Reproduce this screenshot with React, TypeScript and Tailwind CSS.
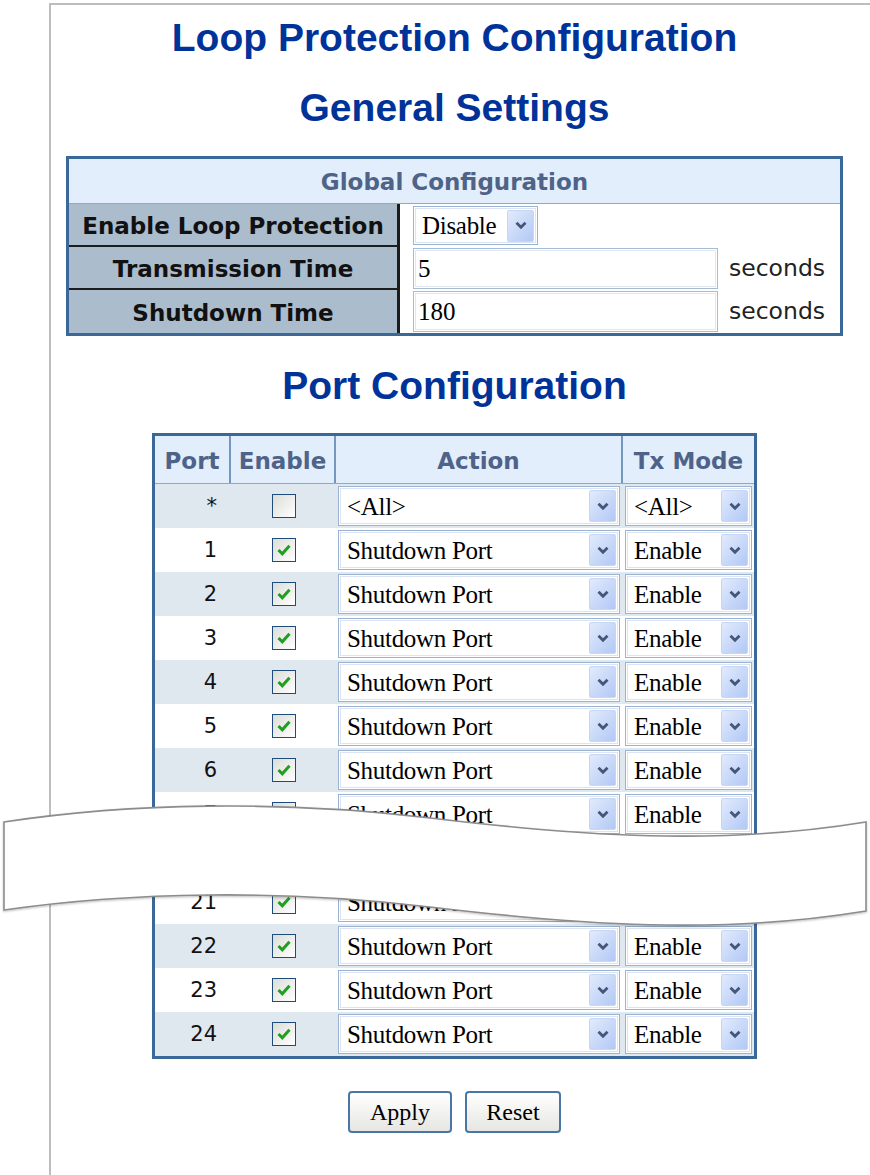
import React from 'react'

const SANS = "font-['DejaVu_Sans','Liberation_Sans',sans-serif]"
const SERIF = "font-['Liberation_Serif','DejaVu_Serif',serif]"

type Row = { port: string; on: boolean; action: string; tx: string }

const ROWS: Row[] = [
  { port: '*', on: false, action: '<All>', tx: '<All>' },
  ...['1', '2', '3', '4', '5', '6', '7', '8', '21', '22', '23', '24'].map((p) => ({
    port: p,
    on: true,
    action: 'Shutdown Port',
    tx: 'Enable',
  })),
]

function Chevron() {
  return (
    <svg width="12" height="9" viewBox="0 0 12 9">
      <path d="M1.5 1.8 L6 6.3 L10.5 1.8" fill="none" stroke="#44567a" strokeWidth="2.8" />
    </svg>
  )
}

function Select({ value, className }: { value: string; className: string }) {
  return (
    <div
      className={`flex items-center justify-between bg-white border border-[#9ab3d2] shadow-[inset_0_0_0_1px_#ffffff,inset_0_0_0_2px_#dbe4f0] pl-[8px] pr-[3px] ${className}`}
    >
      <span className={`${SERIF} text-[25px] leading-none text-black tracking-[-0.3px]`}>{value}</span>
      <span className="flex items-center justify-center w-[27px] h-[32px] rounded-[2px] border border-[#c7d6f5] bg-linear-to-br from-[#e2ebfd] to-[#b2c8f4]">
        <Chevron />
      </span>
    </div>
  )
}

function Checkbox({ on }: { on: boolean }) {
  return (
    <span className="flex items-center justify-center w-[24px] h-[24px] border border-[#1e4c7c] bg-linear-to-br from-[#dcdcd8] to-[#ffffff]">
      {on && (
        <svg width="16" height="14" viewBox="0 0 16 14">
          <path d="M2.5 7 L6.3 10.8 L13.5 2.8" fill="none" stroke="#1f9f1f" strokeWidth="3" />
        </svg>
      )}
    </span>
  )
}

function GlobalRow({ label, last, children }: { label: string; last?: boolean; children: React.ReactNode }) {
  return (
    <div className="flex h-[43px]">
      <div
        className={`w-[331px] flex items-center justify-center pt-[3px] bg-[#abbccc] border-r-[3px] border-[#1c1c1c] ${
          last ? '' : 'border-b-2'
        } ${SANS} font-bold text-[23px] text-[#111]`}
      >
        {label}
      </div>
      <div className="flex-1 flex items-center bg-white pl-[13px]">{children}</div>
    </div>
  )
}

function TextBox({ value }: { value: string }) {
  return (
    <>
      <div className="w-[305px] h-[41px] flex items-center border border-[#a6bcd6] shadow-[inset_0_0_0_1px_#ffffff,inset_0_0_0_2px_#e3e9f2] pl-[4px]">
        <span className={`${SERIF} text-[25px] leading-none text-black`}>{value}</span>
      </div>
      <span className={`ml-[11px] ${SANS} text-[23.5px] text-[#222]`}>seconds</span>
    </>
  )
}

export default function App() {
  return (
    <div className="relative w-[870px] h-[1175px] bg-white overflow-hidden">
      <div className="ml-[49px] mt-[3px] h-[1172px] border-l-2 border-t-2 border-[#bdbdbd]">
        <div className="w-[807px] flex flex-col items-center">
          <h1 className="mt-[11px] font-['Liberation_Sans',Arial,sans-serif] font-bold text-[39px] leading-[44px] text-[#003399]">
            Loop Protection Configuration
          </h1>
          <h2 className="mt-[26px] font-['Liberation_Sans',Arial,sans-serif] font-bold text-[39px] leading-[44px] text-[#003399]">
            General Settings
          </h2>

          <div className="mt-[26px] w-[777px] border-[3px] border-[#3a6898]">
            <div
              className={`h-[45px] flex items-center justify-center pt-[3px] bg-[#e2eefb] border-b border-[#8fa9c9] ${SANS} font-bold text-[23px] text-[#4f6388]`}
            >
              Global Configuration
            </div>
            <GlobalRow label="Enable Loop Protection">
              <Select value="Disable" className="w-[125px] h-[39px]" />
            </GlobalRow>
            <GlobalRow label="Transmission Time">
              <TextBox value="5" />
            </GlobalRow>
            <GlobalRow label="Shutdown Time" last>
              <TextBox value="180" />
            </GlobalRow>
          </div>

          <h2 className="mt-[28px] font-['Liberation_Sans',Arial,sans-serif] font-bold text-[39px] leading-[44px] text-[#003399]">
            Port Configuration
          </h2>

          <div className="mt-[25px] w-[605px] border-[3px] border-[#3a6898]">
            <div
              className={`grid grid-cols-[76px_105px_287px_1fr] h-[48px] bg-[#e2eefb] border-b border-[#8fa9c9] ${SANS} font-bold text-[23px] text-[#4f6388]`}
            >
              <div className="flex items-center justify-center pt-[3px] border-r-2 border-[#7596bd]">Port</div>
              <div className="flex items-center justify-center pt-[3px] border-r-2 border-[#7596bd]">Enable</div>
              <div className="flex items-center justify-center pt-[3px] border-r-2 border-[#7596bd]">Action</div>
              <div className="flex items-center justify-center pt-[3px]">Tx Mode</div>
            </div>
            {ROWS.map((r, i) => (
              <div
                key={r.port}
                className={`grid grid-cols-[76px_105px_287px_1fr] h-[44px] ${i % 2 === 0 ? 'bg-[#dfe7ef]' : 'bg-white'}`}
              >
                <div className={`flex items-center justify-end pr-[14px] pt-[2px] ${SANS} text-[21px] text-[#111]`}>
                  {r.port}
                </div>
                <div className="flex items-center justify-center">
                  <Checkbox on={r.on} />
                </div>
                <div className="pl-[2px] pr-[3px] py-[2px]">
                  <Select value={r.action} className="h-full" />
                </div>
                <div className="px-[2px] py-[2px]">
                  <Select value={r.tx} className="h-full" />
                </div>
              </div>
            ))}
          </div>

          <div className="mt-[32px] flex gap-[13px]">
            <button
              className={`w-[104px] h-[42px] rounded-[4px] border-2 border-[#4a76a6] bg-linear-to-b from-[#ffffff] to-[#e6e6e2] ${SERIF} text-[24px] text-black`}
            >
              Apply
            </button>
            <button
              className={`w-[96px] h-[42px] rounded-[4px] border-2 border-[#4a76a6] bg-linear-to-b from-[#ffffff] to-[#e6e6e2] ${SERIF} text-[24px] text-black`}
            >
              Reset
            </button>
          </div>
        </div>
      </div>

      <svg className="absolute left-0 top-0 pointer-events-none" width="870" height="1175" viewBox="0 0 870 1175">
        <defs>
          <filter id="sh" x="-5%" y="-20%" width="110%" height="140%">
            <feDropShadow dx="0" dy="1" stdDeviation="1.2" floodColor="#000" floodOpacity="0.25" />
          </filter>
        </defs>
        <path
          d="M4 822 C130 803 280 800 430 818 C580 836 720 846 866 822 L866 911 C720 935 580 925 430 907 C280 889 130 892 4 910 Z"
          fill="#ffffff"
          stroke="#8c8c8c"
          strokeWidth="1.6"
          filter="url(#sh)"
        />
      </svg>
    </div>
  )
}
